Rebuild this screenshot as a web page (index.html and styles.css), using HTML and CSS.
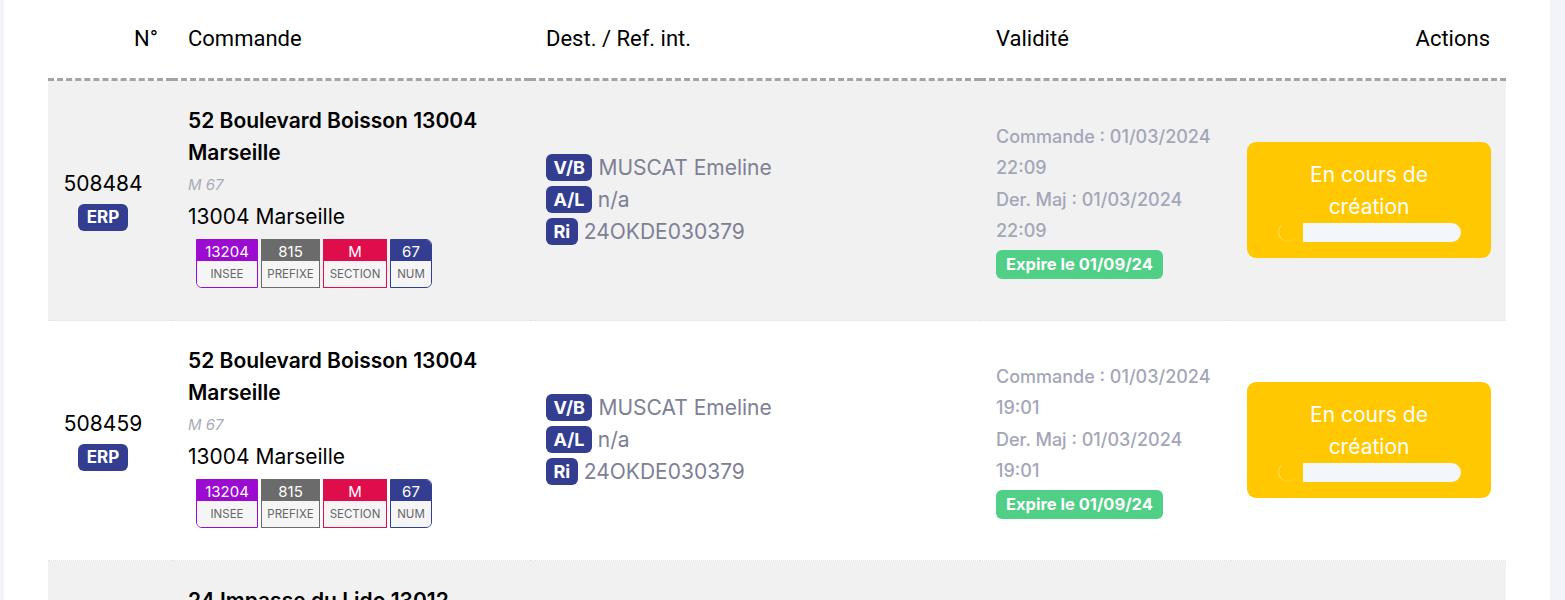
FILE: index.html
```html
<!DOCTYPE html>
<html lang="fr">
<head>
<meta charset="utf-8">
<title>Commandes</title>
<link rel="stylesheet" href="styles.css">
</head>
<body>
<div class="card">
  <table class="orders">
    <colgroup>
      <col class="c-num"><col class="c-cmd"><col class="c-dest"><col class="c-val"><col class="c-act">
    </colgroup>
    <thead>
      <tr>
        <th class="th-num">N°</th>
        <th>Commande</th>
        <th>Dest. / Ref. int.</th>
        <th>Validité</th>
        <th class="th-act">Actions</th>
      </tr>
    </thead>
    <tbody>
      <tr class="row row-alt">
        <td class="td-num">
          <div class="num">508484</div>
          <span class="tag tag-erp">ERP</span>
        </td>
        <td class="td-cmd">
          <div class="addr">52 Boulevard Boisson 13004 Marseille</div>
          <div class="lot">M 67</div>
          <div class="city">13004 Marseille</div>
          <div class="parcel">
            <div class="pc pc-insee"><span class="pv">13204</span><span class="pl">INSEE</span></div>
            <div class="pc pc-prefixe"><span class="pv">815</span><span class="pl">PREFIXE</span></div>
            <div class="pc pc-section"><span class="pv">M</span><span class="pl">SECTION</span></div>
            <div class="pc pc-num"><span class="pv">67</span><span class="pl">NUM</span></div>
          </div>
        </td>
        <td class="td-dest">
          <div class="dl"><span class="tag tag-d">V/B</span><span class="dv">MUSCAT Emeline</span></div>
          <div class="dl"><span class="tag tag-d">A/L</span><span class="dv">n/a</span></div>
          <div class="dl"><span class="tag tag-d">Ri</span><span class="dv">24OKDE030379</span></div>
        </td>
        <td class="td-val">
          <div class="vl">Commande : 01/03/2024 22:09</div>
          <div class="vl">Der. Maj : 01/03/2024 22:09</div>
          <span class="expire">Expire le 01/09/24</span>
        </td>
        <td class="td-act">
          <div class="status">
            <div class="status-text">En cours de création</div>
            <div class="progress"><span class="spin"></span><span class="bar"></span></div>
          </div>
        </td>
      </tr>
      <tr class="row">
        <td class="td-num">
          <div class="num">508459</div>
          <span class="tag tag-erp">ERP</span>
        </td>
        <td class="td-cmd">
          <div class="addr">52 Boulevard Boisson 13004 Marseille</div>
          <div class="lot">M 67</div>
          <div class="city">13004 Marseille</div>
          <div class="parcel">
            <div class="pc pc-insee"><span class="pv">13204</span><span class="pl">INSEE</span></div>
            <div class="pc pc-prefixe"><span class="pv">815</span><span class="pl">PREFIXE</span></div>
            <div class="pc pc-section"><span class="pv">M</span><span class="pl">SECTION</span></div>
            <div class="pc pc-num"><span class="pv">67</span><span class="pl">NUM</span></div>
          </div>
        </td>
        <td class="td-dest">
          <div class="dl"><span class="tag tag-d">V/B</span><span class="dv">MUSCAT Emeline</span></div>
          <div class="dl"><span class="tag tag-d">A/L</span><span class="dv">n/a</span></div>
          <div class="dl"><span class="tag tag-d">Ri</span><span class="dv">24OKDE030379</span></div>
        </td>
        <td class="td-val">
          <div class="vl">Commande : 01/03/2024 19:01</div>
          <div class="vl">Der. Maj : 01/03/2024 19:01</div>
          <span class="expire">Expire le 01/09/24</span>
        </td>
        <td class="td-act">
          <div class="status">
            <div class="status-text">En cours de création</div>
            <div class="progress"><span class="spin"></span><span class="bar"></span></div>
          </div>
        </td>
      </tr>
      <tr class="row row-alt">
        <td class="td-num">
          <div class="num">508431</div>
          <span class="tag tag-erp">ERP</span>
        </td>
        <td class="td-cmd">
          <div class="addr">24 Impasse du Lido 13012 Marseille</div>
          <div class="lot">A 112</div>
          <div class="city">13012 Marseille</div>
          <div class="parcel">
            <div class="pc pc-insee"><span class="pv">13212</span><span class="pl">INSEE</span></div>
            <div class="pc pc-prefixe"><span class="pv">878</span><span class="pl">PREFIXE</span></div>
            <div class="pc pc-section"><span class="pv">A</span><span class="pl">SECTION</span></div>
            <div class="pc pc-num"><span class="pv">112</span><span class="pl">NUM</span></div>
          </div>
        </td>
        <td class="td-dest">
          <div class="dl"><span class="tag tag-d">V/B</span><span class="dv">MUSCAT Emeline</span></div>
          <div class="dl"><span class="tag tag-d">A/L</span><span class="dv">n/a</span></div>
          <div class="dl"><span class="tag tag-d">Ri</span><span class="dv">24OKDE030371</span></div>
        </td>
        <td class="td-val">
          <div class="vl">Commande : 29/02/2024 16:42</div>
          <div class="vl">Der. Maj : 29/02/2024 16:42</div>
          <span class="expire">Expire le 29/08/24</span>
        </td>
        <td class="td-act">
          <div class="status">
            <div class="status-text">En cours de création</div>
            <div class="progress"><span class="spin"></span><span class="bar"></span></div>
          </div>
        </td>
      </tr>
    </tbody>
  </table>
</div>
</body>
</html>
```

FILE: styles.css
```css
html, body {
  margin: 0;
  padding: 0;
}
body {
  background: #f3f4f9;
  font-family: Inter, "Noto Sans", sans-serif;
  color: #000;
  overflow: hidden;
}
.card {
  margin-left: 4px;
  width: 1546px;
  min-height: 600px;
  background: #fff;
  padding: 0 0 0 44px;
  box-sizing: border-box;
}
.orders {
  width: 1458px;
  table-layout: fixed;
  border-collapse: collapse;
}
.c-num { width: 124px; }
.c-cmd { width: 358px; }
.c-dest { width: 450px; }
.c-val { width: 251px; }
.c-act { width: 275px; }

thead th {
  height: 77px;
  padding: 0 16px 1px;
  font-family: Roboto, "Liberation Sans", sans-serif;
  font-weight: 400;
  font-size: 22px;
  line-height: 28px;
  text-align: left;
  vertical-align: middle;
  border-bottom: 3px dashed #a3a3ab;
}
thead th.th-num { text-align: right; padding-right: 14px; }
thead th.th-act { text-align: right; padding-right: 16px; }

.row td {
  vertical-align: middle;
  padding: 27px 16px 29px;
  border-bottom: 1px dotted #e2e2e2;
}
.row-alt td { background: #f1f1f1; }

.row td.td-cmd {
  padding-top: 24px;
  padding-bottom: 32px;
}

.row td.td-num {
  text-align: center;
  padding-left: 0;
  padding-right: 14px;
}
.num {
  font-size: 21px;
  line-height: 30px;
  margin-bottom: 5px;
}
.tag {
  display: inline-flex;
  align-items: center;
  justify-content: center;
  background: #343e91;
  color: #fff;
  font-weight: 700;
  border-radius: 6px;
}
.tag-erp {
  height: 27px;
  padding: 0 9px;
  font-size: 17px;
}

.addr {
  font-size: 21px;
  font-weight: 600;
  line-height: 32px;
}
.lot {
  font-size: 15px;
  font-style: italic;
  color: #a9abb9;
  line-height: 32px;
}
.city {
  font-size: 21px;
  line-height: 31px;
}
.parcel {
  display: flex;
  gap: 3px;
  margin-top: 7px;
  margin-left: 8px;
}
.pc {
  display: flex;
  flex-direction: column;
  border: 1.5px solid;
  box-sizing: border-box;
  height: 49px;
  overflow: hidden;
  text-align: center;
}
.pv {
  height: 21px;
  padding-top: 2px;
  line-height: 20px;
  box-sizing: border-box;
  color: #fff;
  font-size: 15px;
}
.pl {
  flex: 1;
  background: #f5f5f6;
  color: #666;
  font-size: 11.5px;
  line-height: 26px;
}
.pc-insee { width: 62px; border-color: #9b0cd0; border-radius: 0 0 0 6px; }
.pc-insee .pv { background: #9b0cd0; }
.pc-prefixe { width: 59px; border-color: #6b6b6b; }
.pc-prefixe .pv { background: #6b6b6b; }
.pc-section { width: 64px; border-color: #e00d4d; }
.pc-section .pv { background: #e00d4d; }
.pc-num { width: 42px; border-color: #343e91; border-radius: 0 6px 6px 0; }
.pc-num .pv { background: #343e91; }

.dl {
  display: flex;
  align-items: center;
  height: 32px;
}
.tag-d {
  height: 27px;
  padding: 0 7.5px;
  font-size: 18px;
  margin-right: 6px;
}
.dv {
  font-size: 21px;
  color: #7d8094;
}

.vl {
  font-size: 18px;
  font-weight: 500;
  line-height: 31.5px;
  color: #a3a6b8;
}
.expire {
  display: inline-flex;
  align-items: center;
  height: 29px;
  margin-top: 3px;
  padding: 0 10px;
  background: #50cf87;
  color: #fff;
  font-weight: 700;
  font-size: 16.5px;
  border-radius: 6px;
}

.row td.td-act {
  padding-left: 16px;
  padding-right: 15px;
}
.status {
  background: #ffc800;
  border-radius: 9px;
  padding: 17px 30px 16px;
  color: #fff;
  text-align: center;
}
.status-text {
  font-size: 21px;
  line-height: 32px;
}
.progress {
  display: flex;
  justify-content: center;
  align-items: center;
  gap: 5px;
  height: 19px;
}
.spin {
  width: 20px;
  height: 20px;
  box-sizing: border-box;
  border-radius: 50%;
  border: 1.5px solid transparent;
  border-left-color: rgba(255, 255, 255, 0.35);
  border-bottom-color: rgba(255, 255, 255, 0.2);
}
.bar {
  width: 158px;
  height: 19px;
  background: #f3f6fa;
  border-radius: 0 10px 10px 0;
}
```
